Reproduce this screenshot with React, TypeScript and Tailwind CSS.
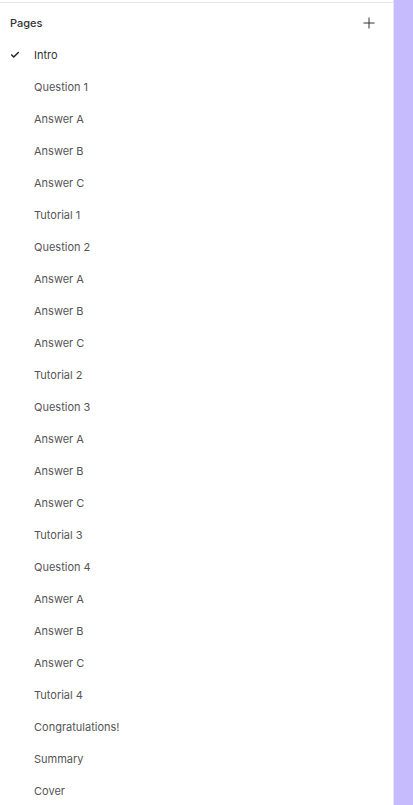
import { Check } from "lucide-react";

const pages = [
  "Intro",
  "Question 1",
  "Answer A",
  "Answer B",
  "Answer C",
  "Tutorial 1",
  "Question 2",
  "Answer A",
  "Answer B",
  "Answer C",
  "Tutorial 2",
  "Question 3",
  "Answer A",
  "Answer B",
  "Answer C",
  "Tutorial 3",
  "Question 4",
  "Answer A",
  "Answer B",
  "Answer C",
  "Tutorial 4",
  "Congratulations!",
  "Summary",
  "Cover",
];

const App = () => {
  return (
    <div className="flex h-[805px] w-[413px] overflow-hidden bg-white font-['Inter',sans-serif] text-[11px]">
      <div className="w-[394px] shrink-0 border-r border-[#e6e1fb] bg-white pt-[2px]">
        <div className="border-t border-[#e5e5e5]">
          <div className="flex h-9 items-center justify-between pl-[10px] pr-[18px] pt-[4px]">
            <span className="font-medium text-[#333]">Pages</span>
            <svg width="12" height="12" viewBox="0 0 12 12" className="text-[#333]">
              <path d="M6 0.5v11M0.5 6h11" stroke="currentColor" strokeWidth="1" fill="none" />
            </svg>
          </div>
          <ul>
            {pages.map((page, index) => (
              <li key={index} className="flex h-8 items-center">
                <span className="flex w-[34px] justify-center pl-[4px] pr-[8px]">
                  {index === 0 && <Check className="h-[10px] w-[10px] text-[#222]" strokeWidth={3.5} />}
                </span>
                <span className={index === 0 ? "text-[#333]" : "text-[#555]"}>{page}</span>
              </li>
            ))}
          </ul>
        </div>
      </div>
      <div className="flex-1 bg-[#c6bbfc]" />
    </div>
  );
};

export default App;
